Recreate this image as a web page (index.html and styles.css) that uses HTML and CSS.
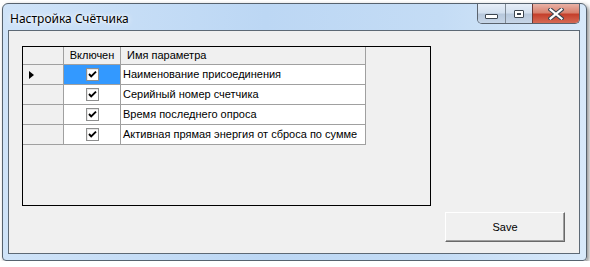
FILE: index.html
```html
<!DOCTYPE html>
<html lang="ru">
<head>
<meta charset="utf-8">
<title>Настройка Счётчика</title>
<link rel="stylesheet" href="styles.css">
</head>
<body>
<div class="window">
  <div class="titlebar">
    <div class="title">Настройка Счётчика</div>
    <div class="caption-buttons">
      <div class="cbtn cbtn-min"><span class="glyph-min"></span></div>
      <div class="cbtn cbtn-max"><span class="glyph-max"></span></div>
      <div class="cbtn cbtn-close">
        <svg width="16" height="12" viewBox="0 0 16 12">
          <path d="M2.5 1.5 L13.5 10.5 M13.5 1.5 L2.5 10.5" stroke="#3c4650" stroke-width="4.2" stroke-linecap="square" fill="none"/>
          <path d="M2.5 1.5 L13.5 10.5 M13.5 1.5 L2.5 10.5" stroke="#ffffff" stroke-width="2.2" stroke-linecap="square" fill="none"/>
        </svg>
      </div>
    </div>
  </div>
  <div class="client">
    <div class="gridbox">
      <div class="dgv">
        <div class="cell rowhead colhead"></div>
        <div class="cell colhead center">Включен</div>
        <div class="cell colhead name-head">Имя параметра</div>

        <div class="cell rowhead"><span class="arrow"></span></div>
        <div class="cell center selected"><span class="check"><svg width="11" height="11" viewBox="0 0 11 11"><path d="M2 5 L4.2 7.4 L9 2.6" stroke="#000" stroke-width="1.9" fill="none"/></svg></span></div>
        <div class="cell data">Наименование присоединения</div>

        <div class="cell rowhead"></div>
        <div class="cell center data-bg"><span class="check"><svg width="11" height="11" viewBox="0 0 11 11"><path d="M2 5 L4.2 7.4 L9 2.6" stroke="#000" stroke-width="1.9" fill="none"/></svg></span></div>
        <div class="cell data">Серийный номер счетчика</div>

        <div class="cell rowhead"></div>
        <div class="cell center data-bg"><span class="check"><svg width="11" height="11" viewBox="0 0 11 11"><path d="M2 5 L4.2 7.4 L9 2.6" stroke="#000" stroke-width="1.9" fill="none"/></svg></span></div>
        <div class="cell data">Время последнего опроса</div>

        <div class="cell rowhead"></div>
        <div class="cell center data-bg"><span class="check"><svg width="11" height="11" viewBox="0 0 11 11"><path d="M2 5 L4.2 7.4 L9 2.6" stroke="#000" stroke-width="1.9" fill="none"/></svg></span></div>
        <div class="cell data">Активная прямая энергия от сброса по сумме</div>
      </div>
    </div>
    <div class="actions">
      <button class="btn">Save</button>
    </div>
  </div>
</div>
</body>
</html>
```

FILE: styles.css
```css
html, body {
  margin: 0;
  padding: 0;
  background: #ffffff;
}

body {
  padding: 3px 0 0 2px;
  font-family: "Liberation Sans", Arial, sans-serif;
  font-size: 11px;
  color: #000;
}

.window {
  width: 585px;
  height: 258px;
  box-sizing: border-box;
  border: 1px solid #56626e;
  border-radius: 6px 6px 4px 4px;
  background: linear-gradient(to right, #cfe3f8 0%, #bcd7f4 45%, #c4dcf5 75%, #d8e9fa 100%);
  box-shadow: 2px 2px 4px rgba(0, 0, 0, 0.45);
  display: flex;
  flex-direction: column;
}

.titlebar {
  height: 26px;
  display: flex;
  justify-content: space-between;
  align-items: flex-start;
  padding: 0 6px 0 7px;
}

.title {
  font-family: "Noto Sans", "Segoe UI", sans-serif;
  font-size: 12px;
  line-height: 14px;
  padding-top: 8px;
  color: #000;
  text-shadow: 0 0 6px #ffffff, 0 0 3px #ffffff;
}

.caption-buttons {
  display: flex;
  height: 20px;
  border: 1px solid #5a636e;
  border-top: none;
  border-radius: 0 0 5px 5px;
  overflow: hidden;
  box-sizing: border-box;
}

.cbtn {
  display: flex;
  align-items: center;
  justify-content: center;
  box-sizing: border-box;
  height: 19px;
}

.cbtn-min {
  width: 28px;
  border-right: 1px solid #7f8a96;
  background: linear-gradient(to bottom, #e6eef8 0%, #d3e0ef 45%, #b7c8dc 55%, #c7d6e8 100%);
}

.cbtn-max {
  width: 27px;
  border-right: 1px solid #6b3a36;
  background: linear-gradient(to bottom, #e6eef8 0%, #d3e0ef 45%, #b7c8dc 55%, #c7d6e8 100%);
}

.cbtn-close {
  width: 46px;
  background: linear-gradient(to bottom, #e9b2a6 0%, #d8826f 45%, #c5402c 55%, #d56a55 100%);
}

.glyph-min {
  display: block;
  width: 11px;
  height: 3px;
  margin-top: 6px;
  background: #ffffff;
  border: 1px solid #3c4650;
  border-radius: 1px;
}

.glyph-max {
  display: block;
  width: 8px;
  height: 6px;
  border: 1px solid #3c4650;
  box-shadow: inset 0 0 0 2px #ffffff, inset 0 0 0 3px #3c4650;
  border-radius: 1px;
  padding: 0;
}

.client {
  flex: 1;
  margin: 0 6px 6px 5px;
  border: 1px solid #5d6975;
  background: #f0f0f0;
  padding: 15px 14px 0 13px;
  display: flex;
  flex-direction: column;
}

.gridbox {
  width: 409px;
  height: 160px;
  box-sizing: border-box;
  border: 1px solid #000;
  background: #f0f0f0;
}

.dgv {
  display: grid;
  grid-template-columns: 41px 57px 245px;
  grid-template-rows: 18px repeat(4, 20px);
}

.cell {
  box-sizing: border-box;
  border-right: 1px solid #a0a0a0;
  border-bottom: 1px solid #a0a0a0;
  display: flex;
  align-items: center;
  white-space: nowrap;
  line-height: 13px;
}

.colhead {
  background: #f0f0f0;
}

.rowhead {
  background: #f0f0f0;
  padding-left: 6px;
}

.center {
  justify-content: center;
}

.name-head {
  padding-left: 6px;
}

.data {
  background: #ffffff;
  padding-left: 2px;
}

.data-bg {
  background: #ffffff;
}

.selected {
  background: #3399ff;
}

.arrow {
  display: block;
  width: 0;
  height: 0;
  border-left: 5px solid #000;
  border-top: 4px solid transparent;
  border-bottom: 4px solid transparent;
}

.check {
  display: flex;
  align-items: center;
  justify-content: center;
  width: 13px;
  height: 13px;
  box-sizing: border-box;
  border: 1px solid #8e8f8f;
  background: #ffffff;
  box-shadow: inset 1px 1px 0 #e8e8e8;
}

.actions {
  display: flex;
  justify-content: flex-end;
  margin-top: 6px;
}

.btn {
  width: 120px;
  height: 30px;
  box-sizing: border-box;
  border: none;
  border-top: 1px solid #ffffff;
  border-left: 1px solid #ffffff;
  border-right: 1px solid #696969;
  border-bottom: 1px solid #696969;
  box-shadow: inset -1px -1px 0 #a0a0a0;
  background: #f0f0f0;
  font-family: "Liberation Sans", Arial, sans-serif;
  font-size: 11px;
  color: #000;
  padding: 0;
}
```
